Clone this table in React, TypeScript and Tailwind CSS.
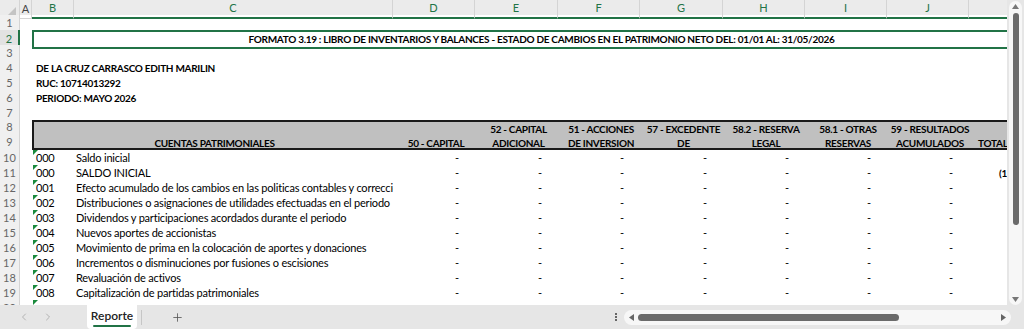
import React from 'react';
import { ChevronLeft, ChevronRight, Plus } from 'lucide-react';

const COLS = 'grid-cols-[20px_12px_42px_319px_82px_83px_82px_83px_82px_82px_82px_82px]';
const LETTERS = ['A', 'B', 'C', 'D', 'E', 'F', 'G', 'H', 'I', 'J', ''];

const HEADERS: [string, string][] = [
  ['', '50 - CAPITAL'],
  ['52 - CAPITAL', 'ADICIONAL'],
  ['51 - ACCIONES', 'DE INVERSION'],
  ['57 - EXCEDENTE', 'DE'],
  ['58.2 - RESERVA', 'LEGAL'],
  ['58.1 - OTRAS', 'RESERVAS'],
  ['59 - RESULTADOS', 'ACUMULADOS'],
];

const ROWS: [string, string][] = [
  ['000', 'Saldo inicial'],
  ['000', 'SALDO INICIAL'],
  ['001', 'Efecto acumulado de los cambios en las politicas contables y correcciones'],
  ['002', 'Distribuciones o asignaciones de utilidades efectuadas en el periodo'],
  ['003', 'Dividendos y participaciones acordados durante el periodo'],
  ['004', 'Nuevos aportes de accionistas'],
  ['005', 'Movimiento de prima en la colocación de aportes y donaciones'],
  ['006', 'Incrementos o disminuciones por fusiones o escisiones'],
  ['007', 'Revaluación de activos'],
  ['008', 'Capitalización de partidas patrimoniales'],
];

// Calibri-ish: bold text needs to be narrower than Lato's bold
const BOLD = 'font-bold text-[10px] tracking-[-0.3px]';
const REG = 'text-[11px] tracking-[-0.2px]';

const RowNum = ({ n, active }: { n: number; active?: boolean }) => (
  <div
    className={
      active
        ? 'flex items-center justify-center bg-[#e2e2e2] border-r-2 border-[#217346] text-[#217346] text-[11px]'
        : 'flex items-center justify-center bg-[#f0f0f0] border-r border-[#d4d4d4] text-[#666] text-[11px]'
    }
  >
    {n}
  </div>
);

const Blank = ({ n, children }: { n: number; children?: React.ReactNode }) => (
  <div className={`grid ${COLS} h-[15px]`}>
    <RowNum n={n} />
    {children}
  </div>
);

const Triangle = () => (
  <span className="absolute left-[1px] top-0 w-0 h-0 border-t-[5px] border-r-[5px] border-t-[#1a8a3c] border-r-transparent" />
);

export default function App() {
  return (
    <div className="w-[1024px] h-[329px] flex flex-col overflow-hidden bg-[#e6e6e6] text-black font-['Lato','Liberation_Sans',sans-serif]">
      <div className="flex h-[305px]">
        <div className="flex-1 overflow-hidden bg-white">
          {/* column letters */}
          <div className={`grid ${COLS} h-[15px] bg-[#ebebeb]`}>
            <div className="flex items-end justify-end pr-[3px] pb-[3px] border-r border-b border-[#d4d4d4]">
              <svg width="8" height="8" viewBox="0 0 8 8">
                <path d="M8 0 L8 8 L0 8 Z" fill="#c4c4c4" />
              </svg>
            </div>
            {LETTERS.map((l, i) => (
              <div
                key={i}
                className={
                  l === 'A'
                    ? 'flex items-center justify-center border-r border-b border-[#d4d4d4] text-[11px] text-[#444]'
                    : 'flex items-center justify-center border-r border-[#d4d4d4] border-b-2 border-b-[#217346] text-[11px] text-[#217346]'
                }
              >
                {l}
              </div>
            ))}
          </div>

          <Blank n={1} />
          <div className={`grid ${COLS} h-[15px]`}>
            <RowNum n={2} active />
            <div />
            <div className={`col-span-10 border-2 border-[#217346] flex items-center justify-center whitespace-nowrap ${BOLD}`}>
              FORMATO 3.19 : LIBRO DE INVENTARIOS Y BALANCES - ESTADO DE CAMBIOS EN EL PATRIMONIO NETO DEL: 01/01 AL: 31/05/2026
            </div>
          </div>
          <Blank n={3} />
          {['DE LA CRUZ CARRASCO EDITH MARILIN', 'RUC: 10714013292', 'PERIODO: MAYO 2026'].map((t, i) => (
            <Blank key={t} n={4 + i}>
              <div />
              <div className={`col-span-4 flex items-center pl-[4px] whitespace-nowrap ${BOLD}`}>{t}</div>
            </Blank>
          ))}
          <Blank n={7} />

          {/* table header rows 8-9 */}
          <div className={`grid ${COLS} grid-rows-[15px_15px]`}>
            <div className="row-start-1 col-start-1 flex items-center justify-center bg-[#f0f0f0] border-r border-[#d4d4d4] text-[#666] text-[11px]">8</div>
            <div className="row-start-2 col-start-1 flex items-center justify-center bg-[#f0f0f0] border-r border-[#d4d4d4] text-[#666] text-[11px]">9</div>
            <div className={`row-span-2 col-start-3 col-span-10 grid grid-cols-[361px_82px_83px_82px_83px_82px_82px_82px_82px] bg-[#c0c0c0] border-t-2 border-b-2 border-l-2 border-[#1a1a1a] leading-[14px] ${BOLD}`}>
              <div className="flex items-end justify-center pb-[1px]">CUENTAS PATRIMONIALES</div>
              {HEADERS.map(([a, b], i) => (
                <div key={i} className="flex flex-col items-center justify-end pb-[1px] whitespace-nowrap">
                  <span className="h-[14px]">{a}</span>
                  <span>{b}</span>
                </div>
              ))}
              <div className="flex items-end pl-[7px] pb-[1px]">TOTAL</div>
            </div>
          </div>

          {ROWS.map(([code, desc], i) => (
            <Blank key={i} n={10 + i}>
              <div />
              <div className={`relative flex items-center pl-[4px] ${REG}`}>
                <Triangle />
                {code}
              </div>
              <div className={`flex items-center pl-[2px] whitespace-nowrap overflow-hidden ${REG}`}>{desc}</div>
              {HEADERS.map((_, j) => (
                <div key={j} className="flex items-center justify-end pr-[16px] text-[11px]">
                  -
                </div>
              ))}
              <div className={`flex items-center pl-[30px] whitespace-nowrap ${BOLD}`}>
                {i === 1 ? '(13,520.00)' : ''}
              </div>
            </Blank>
          ))}
          {/* row 20, only its top edge shows */}
          <Blank n={20}>
            <div />
            <div className="relative">
              <Triangle />
            </div>
          </Blank>
        </div>

        {/* vertical scrollbar */}
        <div className="w-[17px] px-[2px] pt-[1px] bg-[#e6e6e6]">
          <div className="h-full rounded-full bg-[#f7f7f7] flex flex-col items-center">
            <svg width="7" height="5" viewBox="0 0 7 5" className="mt-[3px]">
              <path d="M3.5 0 L7 5 L0 5 Z" fill="#777" />
            </svg>
            <div className="mt-[4px] w-[6px] h-[212px] rounded-full bg-[#6b6b6b]" />
            <div className="flex-1" />
            <svg width="7" height="5" viewBox="0 0 7 5" className="mb-[3px]">
              <path d="M0 0 L7 0 L3.5 5 Z" fill="#777" />
            </svg>
          </div>
        </div>
      </div>

      {/* sheet tabs bar */}
      <div className="h-[24px] flex items-center text-[#666]">
        <div className="w-[87px] flex items-center pl-[18px] gap-[12px] text-[#a0a0a0]">
          <ChevronLeft size={12} strokeWidth={1.5} />
          <ChevronRight size={12} strokeWidth={1.5} />
        </div>
        <div className="w-[50px] h-full bg-white rounded-b-[4px] flex flex-col items-center justify-center">
          <span className="text-[12px] font-semibold text-[#222] leading-[14px] mt-[1px]">Reporte</span>
          <span className="mt-[2px] w-[38px] h-[2px] rounded-full bg-[#217346]" />
        </div>
        <div className="ml-[4px] w-px h-[15px] bg-[#c6c6c6]" />
        <div className="ml-[29px] text-[#555]">
          <Plus size={13} strokeWidth={1.5} />
        </div>
        <div className="flex-1" />
        <div className="mr-[7px] flex flex-col gap-[1px]">
          <span className="w-[2px] h-[2px] bg-[#666]" />
          <span className="w-[2px] h-[2px] bg-[#666]" />
          <span className="w-[2px] h-[2px] bg-[#666]" />
        </div>
        <div className="w-[387px] h-[15px] mr-[13px] rounded-full bg-[#f7f7f7] flex items-center px-[5px]">
          <svg width="5" height="7" viewBox="0 0 5 7">
            <path d="M0 3.5 L5 0 L5 7 Z" fill="#666" />
          </svg>
          <div className="ml-[4px] w-[261px] h-[7px] rounded-full bg-[#6b6b6b]" />
          <div className="flex-1" />
          <svg width="5" height="7" viewBox="0 0 5 7">
            <path d="M5 3.5 L0 0 L0 7 Z" fill="#666" />
          </svg>
        </div>
      </div>
    </div>
  );
}
